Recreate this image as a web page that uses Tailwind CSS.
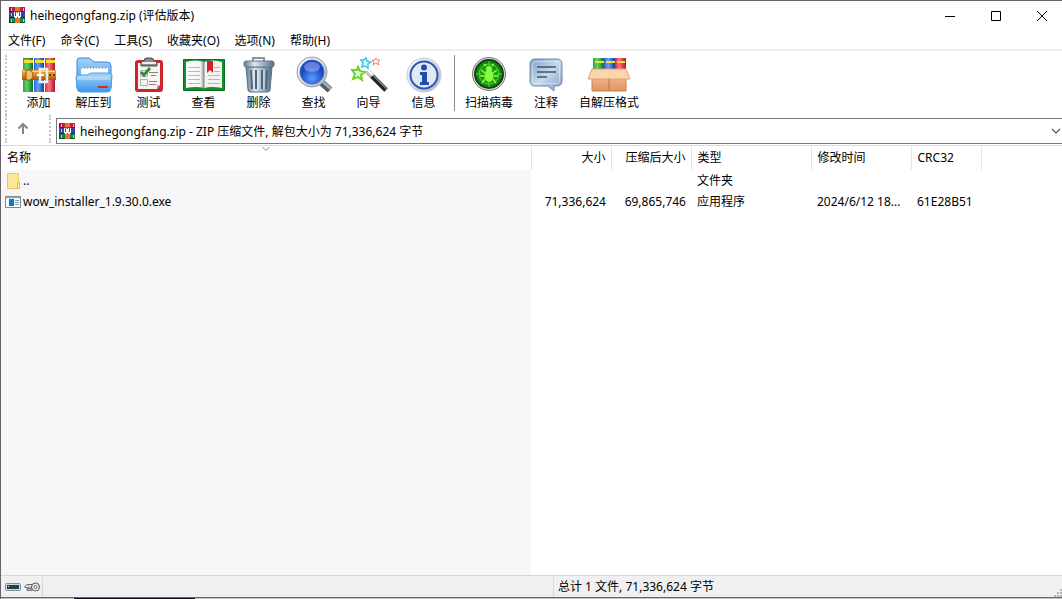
<!DOCTYPE html>
<html lang="zh-CN">
<head>
<meta charset="utf-8">
<title>heihegongfang.zip (评估版本)</title>
<script src="https://cdn.jsdelivr.net/npm/@tailwindcss/browser@4"></script>
</head>
<body class="flex h-screen flex-col overflow-hidden border-l border-t border-[#68636a] bg-white font-['Noto_Sans','Noto_Sans_CJK_SC',sans-serif] text-xs text-black">

<svg class="absolute size-0" aria-hidden="true">
  <defs>
    <linearGradient id="gGreen"><stop offset="0" stop-color="#2aa839"/><stop offset=".4" stop-color="#5ed463"/><stop offset="1" stop-color="#0c6e20"/></linearGradient>
    <linearGradient id="gBlue"><stop offset="0" stop-color="#2c62d8"/><stop offset=".4" stop-color="#64a3f5"/><stop offset="1" stop-color="#143c9c"/></linearGradient>
    <linearGradient id="gRed"><stop offset="0" stop-color="#e0283c"/><stop offset=".4" stop-color="#fb7482"/><stop offset="1" stop-color="#b01228"/></linearGradient>
    <linearGradient id="gBelt" x2="0" y2="1"><stop offset="0" stop-color="#f2a848"/><stop offset=".5" stop-color="#e08a24"/><stop offset="1" stop-color="#9c5410"/></linearGradient>
    <linearGradient id="gFolder" x2="0" y2="1"><stop offset="0" stop-color="#a4d4fa"/><stop offset="1" stop-color="#3d94e8"/></linearGradient>
    <linearGradient id="gSteel"><stop offset="0" stop-color="#64788e"/><stop offset=".35" stop-color="#dde7f0"/><stop offset=".7" stop-color="#93a7bb"/><stop offset="1" stop-color="#536a82"/></linearGradient>
    <linearGradient id="gRim" x2="1" y2="1"><stop offset="0" stop-color="#ffffff"/><stop offset="1" stop-color="#a9b4c4"/></linearGradient>
    <radialGradient id="gLens" cy=".75"><stop offset="0" stop-color="#5d9cff"/><stop offset="1" stop-color="#1746bd"/></radialGradient>
    <radialGradient id="gScan"><stop offset="0" stop-color="#37b81b"/><stop offset="1" stop-color="#0c7d0c"/></radialGradient>
    <linearGradient id="gBubble" x2="1" y2="1"><stop offset="0" stop-color="#7d9cc6"/><stop offset=".5" stop-color="#c9daee"/><stop offset="1" stop-color="#7e9cc4"/></linearGradient>
    <linearGradient id="gBox" x2="0" y2="1"><stop offset="0" stop-color="#fbc79c"/><stop offset="1" stop-color="#e09463"/></linearGradient>
    <linearGradient id="gPage"><stop offset="0" stop-color="#fff"/><stop offset=".8" stop-color="#f4f4f4"/><stop offset="1" stop-color="#999"/></linearGradient>
    <symbol id="books" viewBox="0 0 16 16">
      <path fill="#c21d3c" d="M1 0h15v5H1z"/><path fill="#3c3fa8" d="M0 5h16v6H0z"/><path fill="#168443" d="M1 11h15v5H1z"/>
      <path fill="#6e1034" d="M0 0h1v5H0zM1 4h15v1H1z"/><path fill="#1c2468" d="M0 10h16v1H0z"/><path fill="#0b4b2a" d="M0 11h1v5H0zM1 15h15v1H1z"/>
      <path fill="#f4c93c" d="M2 1h1v3H2zM2 6h1v3H2zM2 12h1v3H2zM14 1h1v3h-1zM14 12h1v3h-1z"/>
      <path fill="#ea742c" d="M6 0h5v16H6z"/><path fill="#9b3a16" d="M5 4h7v7H5z"/><path fill="#fff" d="M5 5h1v4h1V5h1v1h1V5h1v4h1V5h1v5h-1v1H9v-1H8v1H6v-1H5z"/>
    </symbol>
  </defs>
</svg>

<header class="flex h-[29px] shrink-0 items-center justify-between pl-2">
  <h1 class="flex items-center gap-1 whitespace-nowrap pt-px"><svg class="-mt-0.5 size-4" viewBox="0 0 16 16"><use href="#books"/></svg><span class="pl-px">heihegongfang.zip (评估版本)</span></h1>
  <div class="-mr-[3px] flex">
    <button aria-label="最小化" class="flex h-7 w-[46px] items-center justify-center"><svg class="size-3" viewBox="0 0 12 12"><path d="M1 6.500h10" stroke="#000"/></svg></button>
    <button aria-label="最大化" class="flex h-7 w-[46px] items-center justify-center"><svg class="size-3" viewBox="0 0 12 12"><path d="M1.500 1.500h9v9h-9z" fill="none" stroke="#000"/></svg></button>
    <button aria-label="关闭" class="flex h-7 w-[46px] items-center justify-center"><svg class="size-3" viewBox="0 0 12 12"><path d="m1 1 10 10M11 1 1 11" stroke="#000"/></svg></button>
  </div>
</header>

<nav class="flex h-[21px] shrink-0 items-center gap-[15px] whitespace-nowrap border-b-2 border-[#f0f0f0] pl-[7px] pt-0.5">
  <button>文件(F)</button><button>命令(C)</button><button>工具(S)</button><button>收藏夹(O)</button><button>选项(N)</button><button>帮助(H)</button>
</nav>

<div class="flex h-16 shrink-0 pl-1 pt-1" role="toolbar" aria-label="工具栏">
  <div class="mr-1 w-0 border-l-2 border-dotted border-[#c4c4c4]"></div>
  <div class="flex whitespace-nowrap">
    <button class="flex w-[55px] flex-col items-center"><svg class="h-10 w-11" viewBox="0 0 44 40">
      <path fill="url(#gGreen)" d="M6 3h10v34H6z"/><path fill="url(#gBlue)" d="M17 3h10v34H17z"/><path fill="url(#gRed)" d="M28 3h10v34H28z"/>
      <path fill="#f4dd32" d="M7 5h9v3H7zM18 5h9v3h-9zM29 5h9v3h-9z"/><path fill="#3b5520" d="M6 3h10v1H6z" opacity=".5"/>
      <path fill="url(#gBelt)" d="M5 15h34v10H5z"/><path fill="none" stroke="#fbd28c" d="M6 16.500h32"/><path fill="#f2c16e" stroke="#945214" d="M9 15h4c4 2 4 8 0 10H9z"/>
      <path fill="none" stroke="#eee" stroke-width="2.500" d="M23 14h7v13h-7z"/><path stroke="#fff" stroke-width="2" d="M20 20h7"/><path fill="#6c3c10" d="M32 19h2v2h-2zM36 19h2v2h-2z"/></svg><span>添加</span></button>
    <button class="flex w-[55px] flex-col items-center"><svg class="h-10 w-11" viewBox="0 0 44 40">
      <path fill="url(#gFolder)" stroke="#3487d8" d="M5 33V6q0-3 3-3h9l5 4h13q4 0 4 4v22z"/><path fill="#fff" d="M9 13h27v11H9z"/><path stroke="#9aafc4" stroke-width="2" stroke-dasharray="1 2" d="M9 13h27"/>
      <path fill="url(#gFolder)" stroke="#4d9de8" d="M4 22q0-2 2-2h9l4-2h18q3 0 3 3l-1 12q0 4-4 4H9q-4 0-4-4z"/><path fill="#eaf6ff" opacity=".35" d="M5 21h33v4H5z"/><path fill="#d92b1f" d="M26 31h10v2H26z"/></svg><span>解压到</span></button>
    <button class="flex w-[55px] flex-col items-center"><svg class="h-10 w-11" viewBox="0 0 44 40">
      <rect x="8" y="5" width="28" height="32" rx="3" fill="#d3222d"/><path fill="#f7f5f3" d="M11 8h22v22l-3 4H11z"/><path fill="#aaa" d="m33 30-3 4v-4z"/><path fill="#8c8c8c" stroke="#4a4a4a" d="M14 6h3q0-3 3-3h4q3 0 3 3h3v5H14z"/><path stroke="#eee" stroke-width="2" d="M15 8h14"/>
      <path fill="none" stroke="#b8adad" d="M13.500 15.500h7v6h-7zM13.500 24.500h7v6h-7z"/><path fill="none" stroke="#26913a" stroke-width="3" d="m14 17 3 3 6-7"/><path stroke="#8c8181" d="M22 17.500h9M24 20.500h5M22 26.500h8M22 29.500h7"/></svg><span>测试</span></button>
    <button class="flex w-[55px] flex-col items-center"><svg class="h-10 w-11" viewBox="0 0 44 40">
      <path fill="#178b2e" stroke="#0f6c20" d="M1.500 4.500h41v31h-41z"/><path fill="url(#gPage)" d="M4 7q10-3 18 0v26q-8-2-18 0z"/><path fill="#f2f2ee" d="M22 7q8-3 18 0v26q-10-2-18 0z"/><path stroke="#888" d="M22 7v27"/>
      <path fill="none" stroke="#b8b8b8" d="M6 12.500h12M6 16.500h12M6 20.500h12M6 24.500h12M6 28.500h12M26 20.500h12M26 24.500h12M26 28.500h12M32 12.500h6M32 16.500h6"/><path fill="#d2222c" d="M25 6h6v12l-3-3-3 3z"/></svg><span>查看</span></button>
    <button class="flex w-[55px] flex-col items-center"><svg class="h-10 w-11" viewBox="0 0 44 40">
      <path fill="none" stroke="#8396a8" stroke-width="2" d="M16 6V3h11v3"/><path fill="url(#gSteel)" stroke="#5f7286" d="M9 12h26l-2 23q0 2-3 2H14q-3 0-3-2z"/><rect x="7" y="6" width="30" height="6" rx="2" fill="url(#gSteel)" stroke="#64788e"/>
      <path fill="none" stroke="#4f657d" stroke-width="2" d="m14 15 1 19M19 15v19M25 15v19M30 15l-1 19"/><path fill="none" stroke="#e5edf4" d="m16 15 1 19M21 15v19M27 15v19"/></svg><span>删除</span></button>
    <button class="flex w-[55px] flex-col items-center"><svg class="h-10 w-11" viewBox="0 0 44 40">
      <path stroke="#555b64" stroke-width="7" d="m29 27 9 8"/><path stroke="#a6acb5" stroke-width="3" d="m30 26 9 8"/><circle cx="20" cy="17" r="15" fill="url(#gRim)" stroke="#909cae"/><circle cx="20" cy="17" r="12" fill="url(#gLens)" stroke="#456bba"/><ellipse cx="20" cy="12" rx="8" ry="5" fill="#b0b9ff" opacity=".5"/></svg><span>查找</span></button>
    <button class="flex w-[55px] flex-col items-center"><svg class="h-10 w-11" viewBox="0 0 44 40">
      <path stroke="#222" stroke-width="5" d="m21 17 18 18"/><path stroke="#777" stroke-width="2" d="m23 17 17 17"/><path stroke="#c8c8c8" stroke-width="5" d="m20 16 5 5"/><path stroke="#fff" stroke-width="2" d="m21 15 5 5"/>
      <path fill="#efffe0" stroke="#67d52d" stroke-width="2" d="m11 12 2 4 5 1-4 3 1 5-4-3-5 2 2-5-3-4h5z"/><path fill="#e8ffff" stroke="#35c5ea" stroke-width="1.500" d="m19 3 1 3 4 1-3 2v4l-3-2-3 1 1-4-2-3h3z"/><path fill="#fff" stroke="#f28080" d="m29 3 1 2h3l-2 2 1 3-3-2-3 2 1-3-2-2h3z"/></svg><span>向导</span></button>
    <button class="flex w-[55px] flex-col items-center"><svg class="h-10 w-11" viewBox="0 0 44 40">
      <circle cx="22" cy="20" r="17" fill="url(#gRim)" stroke="#c5ccd5"/><circle cx="22" cy="20" r="13.500" fill="#e1e9f5" stroke="#2c58b0" stroke-width="2"/><circle cx="22" cy="12.500" r="3" fill="#204ea8"/><path fill="#204ea8" d="M18 17h7v10h2v3h-9v-3h2v-7h-2z"/></svg><span>信息</span></button>
    <div class="ml-[3px] mr-1.5 h-14 w-px bg-[#8c8c8c]"></div>
    <button class="flex w-14 flex-col items-center"><svg class="h-10 w-11" viewBox="0 0 44 40">
      <circle cx="22" cy="19" r="16.500" fill="#ddd" stroke="#777"/><circle cx="22" cy="19" r="14" fill="url(#gScan)" stroke="#173f18" stroke-width="2"/><circle cx="22" cy="19" r="10" fill="none" stroke="#41d834"/><path stroke="#43dc32" d="M22 6v5M22 27v5M9 19h5M30 19h5"/>
      <ellipse cx="22" cy="21" rx="4.500" ry="6" fill="#8aff41"/><circle cx="22" cy="14" r="3" fill="#8aff41"/><path fill="none" stroke="#8aff41" stroke-width="1.500" d="m19 11-2-2M25 11l2-2M18 18l-4-3M26 18l4-3M17 21h-4M27 21h4M18 24l-3 4M26 24l3 4"/></svg><span>扫描病毒</span></button>
    <button class="flex w-[58px] flex-col items-center"><svg class="h-10 w-11" viewBox="0 0 44 40">
      <path fill="url(#gBubble)" stroke="#7089ac" d="M11 4h22q5 0 5 5v17q0 5-5 5h-3v5l-6-5H11q-5 0-5-5V9q0-5 5-5z"/><rect x="8.500" y="6.500" width="27" height="22" rx="3" fill="none" stroke="#dce8f5" opacity=".7"/><path stroke="#40526c" stroke-width="1.500" d="M13 12h19M13 17h19M13 22h10"/></svg><span>注释</span></button>
    <button class="flex w-[68px] flex-col items-center"><svg class="h-10 w-11" viewBox="0 0 44 40">
      <path fill="url(#gGreen)" d="M6 3h11v16H6z"/><path fill="url(#gBlue)" d="M17 3h11v16H17z"/><path fill="url(#gRed)" d="M28 3h11v16H28z"/><path fill="#f7dc37" d="M8 6h9v2H8zM19 6h9v2h-9zM30 6h8v2h-8z"/>
      <path fill="url(#gBox)" stroke="#c78257" d="M5 15h34v21H5z"/><path fill="#fbd5ae" stroke="#dda070" d="M5 14h34l4 10H1z"/><path stroke="#bc7246" d="M22 24v12"/></svg><span>自解压格式</span></button>
  </div>
</div>

<div class="flex h-[31px] shrink-0 border-b border-[#dcdcdc] pl-1">
  <div class="h-7 border-l-2 border-dotted border-[#c4c4c4]"></div>
  <button aria-label="上一级" class="flex h-7 w-8 items-center justify-center"><svg class="size-4" viewBox="0 0 16 16"><path d="M8 13V3M3.500 7.500 8 3l4.500 4.500" fill="none" stroke="#858585" stroke-width="2"/></svg></button>
  <div class="ml-2.5 mr-[5px] h-7 border-l-2 border-dotted border-[#c4c4c4]"></div>
  <button aria-haspopup="listbox" class="mt-[3px] flex h-[26px] flex-1 items-center border border-r-0 border-[#7a7a7a] pl-0.5 text-left">
    <svg class="mr-[5px] size-4" viewBox="0 0 16 16"><use href="#books"/></svg>
    <span class="flex-1 pt-px">heihegongfang.zip - ZIP 压缩文件, 解包大小为 71,336,624 字节</span>
    <svg class="mr-px h-3 w-2.5" viewBox="0 0 10 12"><path d="m1 4 4 4 4-4" fill="none" stroke="#555" stroke-width="1.200"/></svg>
  </button>
</div>

<main class="relative min-h-0 flex-1">
  <svg class="absolute left-[261px] top-0 h-1.5 w-2" viewBox="0 0 8 6"><path d="m.5 1 3.500 3.500L7.500 1" fill="none" stroke="#8a8a8a"/></svg>
  <table class="h-full w-full table-fixed border-collapse whitespace-nowrap text-left">
    <colgroup><col class="w-[530px] bg-[#f7f7f7]"><col class="w-20"><col class="w-20"><col class="w-[120px]"><col class="w-[100px]"><col class="w-[70px]"><col></colgroup>
    <thead><tr class="h-6 bg-white">
      <th class="border-r border-[#e5e5e5] pl-1.5 font-normal">名称</th>
      <th class="border-r border-[#e5e5e5] pr-[5px] text-right font-normal">大小</th>
      <th class="border-r border-[#e5e5e5] pr-[5px] text-right font-normal">压缩后大小</th>
      <th class="border-r border-[#e5e5e5] pl-1.5 font-normal">类型</th>
      <th class="border-r border-[#e5e5e5] pl-1.5 font-normal">修改时间</th>
      <th class="border-r border-[#e5e5e5] pl-1.5 font-normal">CRC32</th><td></td>
    </tr></thead>
    <tbody>
      <tr class="h-[21px]"><td class="pl-1"><a href="#" class="flex items-center"><svg class="h-[18px] w-[18px]" viewBox="0 0 18 18"><path fill="#ffe79a" stroke="#e8c95b" d="M2.500 1.500h11v15h-11z"/><path fill="#fff1b8" stroke="#e1bd49" d="M12.500 10.500h2v6h-2z"/></svg>..</a></td><td></td><td></td><td class="pl-1.5">文件夹</td><td></td><td></td><td></td></tr>
      <tr class="h-[21px]"><td class="pl-1"><a href="#" class="flex items-center"><svg class="h-[18px] w-[18px]" viewBox="0 0 18 18"><path fill="#fff" stroke="#7d8790" d="M.5 3.500h15v11H.5z"/><path stroke="#9ba5ad" stroke-width="1.500" d="M1 4.500h14"/><path fill="#0878d8" d="M4 6h5v7H4z"/><path stroke="#8299ad" d="M10 7.500h4M10 9.500h4M10 11.500h4"/></svg>wow_installer_1.9.30.0.exe</a></td><td class="pr-[5px] text-right">71,336,624</td><td class="pr-[5px] text-right">69,865,746</td><td class="pl-1.5">应用程序</td><td class="pl-1.5">2024/6/12 18...</td><td class="pl-1.5">61E28B51</td><td></td></tr>
      <tr><td></td><td></td><td></td><td></td><td></td><td></td><td></td></tr>
    </tbody>
  </table>
</main>

<footer class="flex h-[23px] shrink-0 items-center border-y border-b-[#666] border-t-[#d7d7d7] bg-[#f0f0f0]">
  <div class="flex h-5 w-[42px] items-center gap-[3px] border-r border-[#d7d7d7] pl-1">
    <svg class="h-4 w-4" viewBox="0 0 16 16"><rect x=".5" y="4.500" width="15" height="7" rx="1" fill="#c9dce5" stroke="#7897a4"/><path fill="#333b3e" d="M2 6h12v4H2z"/><path fill="#eee" d="M3 7h1v1H3z"/></svg>
    <svg class="h-4 w-[17px]" viewBox="0 0 17 16"><path fill="#ddd" stroke="#666" d="M8 5.500H3L.5 8l2 1 1-1 1 1h3.500"/><path fill="#bbb" stroke="#777" d="M3 9.500h5v2H3z"/><circle cx="11.500" cy="8" r="4" fill="#eee" stroke="#555"/><circle cx="11.500" cy="8" r="1.500" fill="#fff" stroke="#666"/></svg>
  </div>
  <div class="h-5 w-[511px] border-r border-[#d7d7d7]"></div>
  <p class="flex-1 pl-1">总计 1 文件, 71,336,624 字节</p>
  <svg class="size-2 self-end" viewBox="0 0 8 8"><path fill="#b5b5b5" d="M0 6h2v2H0zM3 6h2v2H3zM6 6h2v2H6zM3 3h2v2H3zM6 3h2v2H6zM6 0h2v2H6z"/></svg>
</footer>
<div class="flex h-px shrink-0 bg-[#c4c4c4]"><div class="ml-[73px] w-[121px] bg-[#150d1c]"></div></div>
</body>
</html>
